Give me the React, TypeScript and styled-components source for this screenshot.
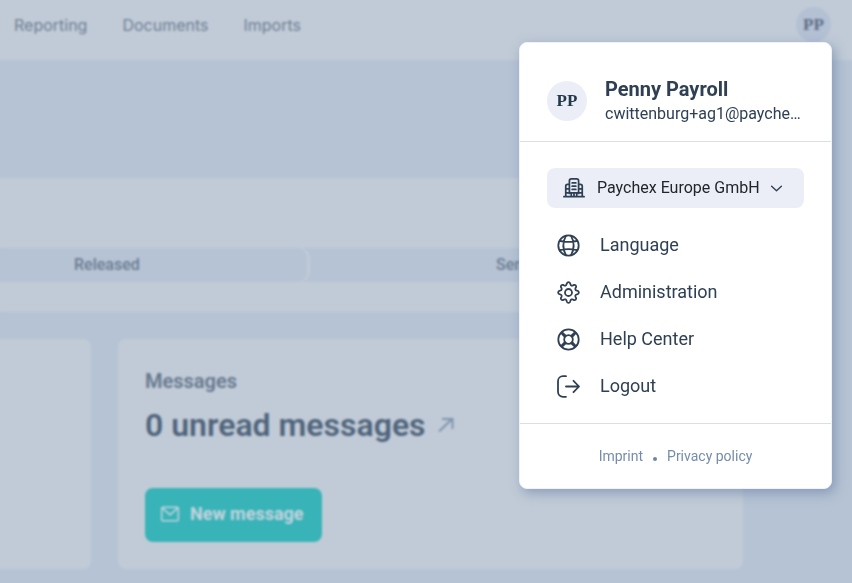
import React from "react";
import styled, { createGlobalStyle } from "styled-components";

const color = {
  page: "#b6c3d4",
  surface: "#c1cbd7",
  ink: "#2f4054",
  teal: "#38b3b7",
  pale: "#ebeef6",
};

const GlobalStyle = createGlobalStyle`
  * { box-sizing: border-box; }
  html, body, #root { min-height: 100vh; }
  body {
    margin: 0;
    background: ${color.page};
    color: ${color.ink};
    font-family: Roboto, sans-serif;
    overflow: hidden;
  }
`;

const Page = styled.div`
  position: relative;
  min-height: 100vh;
  background: ${color.page};
`;

const TopBar = styled.header`
  display: flex;
  align-items: center;
  justify-content: space-between;
  height: 60px;
  padding: 0 21px 11px 14px;
  background: ${color.surface};
`;

const Nav = styled.nav`
  display: flex;
  gap: 35px;
`;

const NavLink = styled.a`
  color: #6f8094;
  font: 400 16px/20px Inter, sans-serif;
  text-decoration: none;
`;

const Avatar = styled.span<{ $size: number; $muted?: boolean }>`
  display: flex;
  flex: none;
  align-items: center;
  justify-content: center;
  width: ${(p) => p.$size}px;
  height: ${(p) => p.$size}px;
  border-radius: 50%;
  background: ${(p) => (p.$muted ? "#b4c0d4" : color.pale)};
  color: ${(p) => (p.$muted ? "#5c6e84" : "#23384a")};
  font: 700 17px/20px "Liberation Serif", serif;
`;

const AvatarButton = styled.button`
  padding: 0;
  border: 0;
  background: none;
`;

const Main = styled.main`
  display: flex;
  flex-direction: column;
  gap: 27px;
  padding: 118px 109px 14px 0;
`;

const Progress = styled.section`
  padding: 70px 0 30px;
  background: ${color.surface};
`;

const Steps = styled.ol`
  display: grid;
  grid-template-columns: 310px 1fr;
  margin: 0;
  padding: 0;
  list-style: none;
  background: ${color.page};
`;

const Step = styled.li<{ $current?: boolean }>`
  height: 34px;
  padding-left: ${(p) => (p.$current ? 74 : 186)}px;
  border-radius: ${(p) => (p.$current ? "0 10px 10px 0" : "0")};
  box-shadow: ${(p) => (p.$current ? `inset -3px 0 0 ${color.surface}` : "none")};
  color: #6b7c92;
  font-size: 16px;
  font-weight: 500;
  line-height: 34px;
`;

const Cards = styled.div`
  display: grid;
  grid-template-columns: 91px 1fr;
  gap: 27px;
`;

const Card = styled.section<{ $cut?: boolean }>`
  min-height: 230px;
  padding: 30px 27px 27px;
  border-radius: ${(p) => (p.$cut ? "0 8px 8px 0" : "8px")};
  background: ${color.surface};
`;

const CardLabel = styled.h2`
  margin: 0 0 12px;
  color: #66788e;
  font-size: 20px;
  font-weight: 600;
  line-height: 24px;
`;

const CardTitle = styled.a`
  display: flex;
  align-items: center;
  gap: 12px;
  margin-bottom: 43px;
  color: #4f647b;
  font-size: 32px;
  font-weight: 600;
  line-height: 40px;
  text-decoration: none;
`;

const NewButton = styled.button`
  display: flex;
  align-items: center;
  gap: 10px;
  height: 54px;
  padding: 0 18px 2px 15px;
  border: 0;
  border-radius: 8px;
  background: ${color.teal};
  color: #c5d4df;
  font: 700 18px/24px Roboto, sans-serif;
`;

const Scrim = styled.div`
  position: absolute;
  inset: 0;
  backdrop-filter: blur(1px);
`;

const Menu = styled.aside`
  position: absolute;
  top: 42px;
  right: 20px;
  width: 313px;
  border: 1px solid #eef2f9;
  border-radius: 8px;
  background: #fff;
  box-shadow: 3px 4px 12px rgba(88, 112, 156, 0.5);
`;

const Profile = styled.header`
  display: flex;
  align-items: center;
  gap: 18px;
  padding: 33px 27px 15px;
  border-bottom: 1px solid #dcdfe2;
`;

const Name = styled.h1`
  margin: 0;
  font-size: 20px;
  font-weight: 700;
  line-height: 26px;
`;

const Email = styled.p`
  margin: 0;
  font-size: 16px;
  line-height: 24px;
  white-space: nowrap;
`;

const MenuBody = styled.div`
  padding: 26px 27px 13px;
`;

const Company = styled.label`
  display: flex;
  align-items: center;
  height: 40px;
  padding-left: 16px;
  border-radius: 8px;
  background: ${color.pale};
`;

const CompanySelect = styled.select`
  appearance: none;
  margin: 0 10px 0 12px;
  padding: 0;
  border: 0;
  background: none;
  color: #222529;
  font: 400 16px/24px Roboto, sans-serif;
`;

const MenuList = styled.ul`
  display: grid;
  margin: 14px 0 0;
  padding: 0;
  list-style: none;
`;

const MenuButton = styled.button`
  display: flex;
  align-items: center;
  gap: 20px;
  width: 100%;
  height: 47px;
  padding: 0 9px 1px;
  border: 0;
  background: none;
  color: ${color.ink};
  font: 400 18px/24px Roboto, sans-serif;
`;

const MenuFooter = styled.footer`
  display: flex;
  align-items: center;
  justify-content: center;
  gap: 10px;
  padding: 22px 0 22px;
  border-top: 1px solid #dcdfe2;
`;

const FooterLink = styled.a`
  color: #768cac;
  font-size: 14px;
  line-height: 20px;
  text-decoration: none;
`;

const Dot = styled.span`
  width: 4px;
  height: 4px;
  margin-top: 5px;
  border-radius: 50%;
  background: #6e87a9;
`;

const Icon = ({ size = 24, width = 1.8, children }: { size?: number; width?: number; children: React.ReactNode }) => (
  <svg
    width={size}
    height={size}
    viewBox="0 0 24 24"
    fill="none"
    stroke="currentColor"
    strokeWidth={width}
    strokeLinecap="round"
    strokeLinejoin="round"
    aria-hidden="true"
  >
    {children}
  </svg>
);

const Globe = () => (
  <Icon>
    <circle cx="12.5" cy="12.5" r="10.2" />
    <path d="M10 2.600c-3.300 6.100-3.300 13.700 0 19.800M15 2.600c3.300 6.100 3.300 13.700 0 19.800M4.300 8c5.200 1.200 11.200 1.200 16.400 0M4 17c5.400-1.200 11.600-1.200 17 0" />
  </Icon>
);

const Gear = () => (
  <Icon>
    <circle cx="12.5" cy="12.5" r="3.500" />
    <path d="M10.900 3.300a1.700 1.700 0 0 1 3.200 0l.4 1.200a1.700 1.700 0 0 0 2.400 1l1.100-.6a1.700 1.700 0 0 1 2.100 2.100l-.6 1.100a1.700 1.700 0 0 0 1 2.400l1.200.4a1.700 1.700 0 0 1 0 3.200l-1.200.4a1.700 1.700 0 0 0-1 2.400l.6 1.100a1.700 1.700 0 0 1-2.100 2.100l-1.100-.6a1.700 1.700 0 0 0-2.400 1l-.4 1.200a1.700 1.700 0 0 1-3.200 0l-.4-1.200a1.700 1.700 0 0 0-2.400-1l-1.100.6a1.700 1.700 0 0 1-2.100-2.100l.6-1.100a1.700 1.700 0 0 0-1-2.400l-1.200-.4a1.700 1.700 0 0 1 0-3.200l1.200-.4a1.700 1.700 0 0 0 1-2.400l-.6-1.100a1.700 1.700 0 0 1 2.100-2.100l1.100.6a1.700 1.700 0 0 0 2.400-1z" />
  </Icon>
);

const Lifebuoy = () => (
  <Icon>
    <circle cx="12.5" cy="12.5" r="10.2" />
    <circle cx="12.5" cy="12.5" r="4.300" />
    <path d="M8.800 10 5.600 6.400M10 8.800 6.400 5.600M15 8.800l3.600-3.200M16.200 10l3.200-3.600M16.200 15l3.200 3.600M15 16.200l3.600 3.200M10 16.200l-3.600 3.200M8.800 15l-3.200 3.600" />
  </Icon>
);

const Exit = () => (
  <Icon>
    <path d="M10 2.200H7a5 5 0 0 0-5 5v10.600a5 5 0 0 0 5 5h3M10 12.500h13M17.500 6.800l5.500 5.700-5.500 5.700" />
  </Icon>
);

const Building = () => (
  <Icon size={22} width={1.9}>
    <path d="M1 21.500h22M3 21V10a2 2 0 0 1 2-2h2M21 21V10a2 2 0 0 0-2-2h-2M7 18V4a2 2 0 0 1 2-2h6a2 2 0 0 1 2 2v14M10 6.500h4M10 10h4M10 13.500h4M4 13h3M4 17.200h16M17 13h3M9 21v-3.500M12 21v-3.500M15 21v-3.500" />
  </Icon>
);

const navigation = ["Reporting", "Documents", "Imports"];

const entries = [
  { label: "Language", Glyph: Globe },
  { label: "Administration", Glyph: Gear },
  { label: "Help Center", Glyph: Lifebuoy },
  { label: "Logout", Glyph: Exit },
];

export default function App() {
  return (
    <>
      <GlobalStyle />
      <Page>
        <TopBar>
          <Nav>
            {navigation.map((item) => (
              <NavLink key={item} href="#">{item}</NavLink>
            ))}
          </Nav>
          <AvatarButton type="button">
            <Avatar $size={35} $muted>PP</Avatar>
          </AvatarButton>
        </TopBar>
        <Main>
          <Progress>
            <Steps>
              <Step $current>Released</Step>
              <Step>Sen</Step>
            </Steps>
          </Progress>
          <Cards>
            <Card $cut />
            <Card>
              <CardLabel>Messages</CardLabel>
              <CardTitle href="#">
                0 unread messages
                <svg width="16" height="16" viewBox="0 0 16 16" fill="none" stroke="#8094ad" strokeWidth="2" aria-hidden="true">
                  <path d="M1 14.500 14 2M4 2h10.500v10" />
                </svg>
              </CardTitle>
              <NewButton type="button">
                <Icon size={20} width={1.8}>
                  <rect x="2" y="4" width="20" height="16" rx="1.5" />
                  <path d="m3 5 9 8 9-8" />
                </Icon>
                New message
              </NewButton>
            </Card>
          </Cards>
        </Main>
        <Scrim />
        <Menu>
          <Profile>
            <Avatar $size={40}>PP</Avatar>
            <div>
              <Name>Penny Payroll</Name>
              <Email>cwittenburg+ag1@payche…</Email>
            </div>
          </Profile>
          <MenuBody>
            <Company htmlFor="company">
              <Building />
              <CompanySelect id="company" aria-label="Company">
                <option>Paychex Europe GmbH</option>
              </CompanySelect>
              <Icon size={13} width={2.6}>
                <path d="m3 8 9 8 9-8" />
              </Icon>
            </Company>
            <MenuList>
              {entries.map(({ label, Glyph }) => (
                <li key={label}>
                  <MenuButton type="button">
                    <Glyph />
                    {label}
                  </MenuButton>
                </li>
              ))}
            </MenuList>
          </MenuBody>
          <MenuFooter>
            <FooterLink href="#">Imprint</FooterLink>
            <Dot />
            <FooterLink href="#">Privacy policy</FooterLink>
          </MenuFooter>
        </Menu>
      </Page>
    </>
  );
}
